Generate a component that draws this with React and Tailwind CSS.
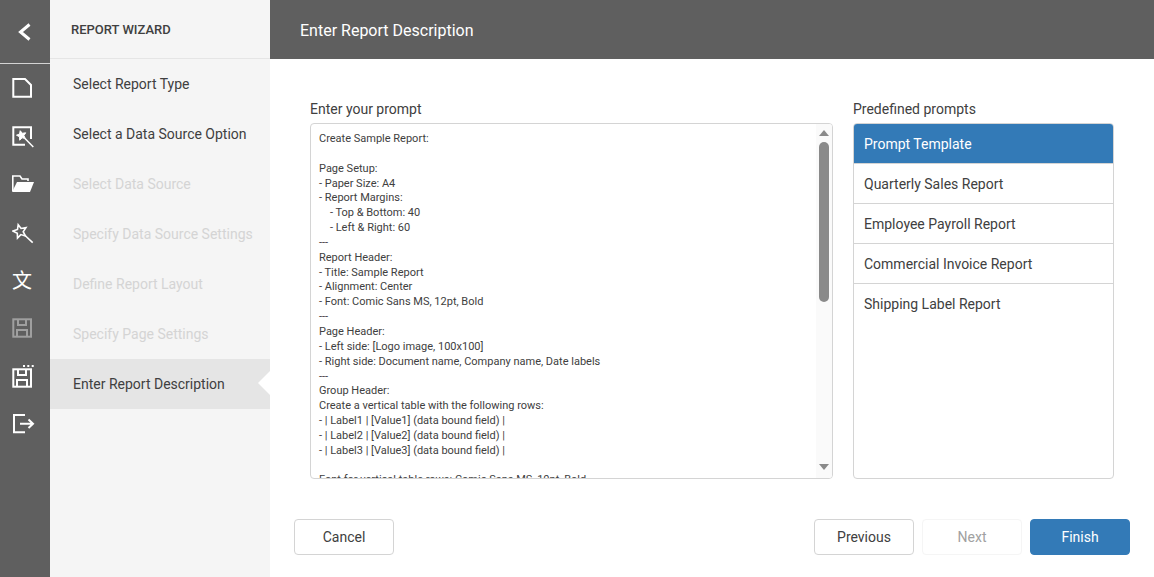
const STEPS = [
  { label: 'Select Report Type' },
  { label: 'Select a Data Source Option' },
  { label: 'Select Data Source', disabled: true },
  { label: 'Specify Data Source Settings', disabled: true },
  { label: 'Define Report Layout', disabled: true },
  { label: 'Specify Page Settings', disabled: true },
  { label: 'Enter Report Description', active: true },
];

const PROMPTS = [
  'Prompt Template',
  'Quarterly Sales Report',
  'Employee Payroll Report',
  'Commercial Invoice Report',
  'Shipping Label Report',
];

const PROMPT_TEXT = `Create Sample Report:

Page Setup:
- Paper Size: A4
- Report Margins:
    - Top & Bottom: 40
    - Left & Right: 60
---
Report Header:
- Title: Sample Report
- Alignment: Center
- Font: Comic Sans MS, 12pt, Bold
---
Page Header:
- Left side: [Logo image, 100x100]
- Right side: Document name, Company name, Date labels
---
Group Header:
Create a vertical table with the following rows:
- | Label1 | [Value1] (data bound field) |
- | Label2 | [Value2] (data bound field) |
- | Label3 | [Value3] (data bound field) |

Font for vertical table rows: Comic Sans MS, 10pt, Bold`;

// Five-pointed star used by the two wand icons
function starPoints(cx, cy, outer, inner) {
  const pts = [];
  for (let i = 0; i < 10; i++) {
    const r = i % 2 === 0 ? outer : inner;
    const a = ((i * 36 - 105) * Math.PI) / 180;
    pts.push(`${(cx + r * Math.cos(a)).toFixed(1)},${(cy + r * Math.sin(a)).toFixed(1)}`);
  }
  return pts.join(' ');
}

function Icon({ children }) {
  return (
    <svg viewBox="0 0 24 24" className="w-6 h-6 text-white" fill="none" stroke="currentColor" strokeWidth="2">
      {children}
    </svg>
  );
}

function FloppyBody({ top }) {
  return (
    <>
      <rect x="1.3" y={top} width="17.7" height="17.4" />
      <path d={`M6 ${top} V${top + 5.7} H14 V${top}`} />
      <path d={`M5 ${top + 17.4} V${top + 10.7} H15 V${top + 17.4}`} />
    </>
  );
}

function RailItem({ children }) {
  return <div className="h-12 flex items-center pl-3">{children}</div>;
}

function Rail() {
  return (
    <aside className="w-[50px] shrink-0 bg-[#5f5f5f]">
      <div className="h-16 flex items-center pl-3 border-b border-neutral-300">
        <Icon>
          <path d="M17.5 4.5 L8.5 12 L17.5 19.5" strokeWidth="3" />
        </Icon>
      </div>
      <RailItem>
        <Icon>
          <path d="M1.3 3 H13 L19 9 V20.7 H1.3 Z" />
        </Icon>
      </RailItem>
      <RailItem>
        <Icon>
          <path d="M13 20.7 H1.3 V3.3 H19 V15" />
          <polygon points={starPoints(9.5, 11.5, 5, 2.4)} fill="currentColor" strokeWidth="1" />
          <path d="M13 14.5 L21.3 23" strokeWidth="1.5" />
        </Icon>
      </RailItem>
      <RailItem>
        <Icon>
          <path d="M0.8 19 V4 H8 L10 7 H16 V9" strokeWidth="1.6" />
          <polygon points="5,10 22,10 18,20 0,20" fill="currentColor" stroke="none" />
        </Icon>
      </RailItem>
      <RailItem>
        <Icon>
          <polygon points={starPoints(8, 11.5, 7, 3.2)} strokeWidth="1.6" />
          <path d="M12.5 15 L20.7 22.7" strokeWidth="1.6" />
        </Icon>
      </RailItem>
      <RailItem>
        <span className="text-xl leading-none text-white font-['Noto_Sans_CJK_SC',sans-serif]">文</span>
      </RailItem>
      <RailItem>
        <div className="opacity-40">
          <Icon>
            <FloppyBody top={3.3} />
          </Icon>
        </div>
      </RailItem>
      <RailItem>
        <Icon>
          <FloppyBody top={5.3} />
          <g fill="currentColor" stroke="none">
            <rect x="11" y="1" width="2" height="2" />
            <rect x="15.3" y="1" width="2" height="2" />
            <rect x="19.7" y="1" width="2" height="2" />
          </g>
        </Icon>
      </RailItem>
      <RailItem>
        <Icon>
          <path d="M13 3 H2 V20.3 H13" />
          <path d="M8 11.7 H20 M16.5 7.5 L21 11.7 L16.5 16" />
        </Icon>
      </RailItem>
    </aside>
  );
}

function StepNav() {
  return (
    <nav className="w-[220px] shrink-0 bg-neutral-100">
      <div className="h-[59px] flex items-center pl-[21px] pt-0.5 border-b border-neutral-200 text-[13px] font-medium text-neutral-700">
        REPORT WIZARD
      </div>
      {STEPS.map(step => (
        <div
          key={step.label}
          className={`relative h-[50px] flex items-center pl-[23px] text-sm ${
            step.disabled ? 'text-neutral-300' : 'text-neutral-700'
          } ${step.active ? 'bg-neutral-200' : ''}`}
        >
          {step.label}
          {step.active && (
            <span className="absolute right-0 top-3 border-y-12 border-r-12 border-y-transparent border-r-white" />
          )}
        </div>
      ))}
    </nav>
  );
}

function Scrollbar() {
  return (
    <div className="w-4 shrink-0 flex flex-col items-center bg-neutral-50 text-[#8a8a8a]">
      <svg viewBox="0 0 10 6" className="w-2.5 h-1.5 mt-1.5 fill-current">
        <path d="M5 0 L10 6 H0 Z" />
      </svg>
      <div className="w-2.5 h-40 mt-1.5 rounded-full bg-current" />
      <svg viewBox="0 0 10 6" className="w-2.5 h-1.5 mt-auto mb-2 fill-current">
        <path d="M0 0 H10 L5 6 Z" />
      </svg>
    </div>
  );
}

function Button({ children, variant }) {
  const styles = {
    primary: 'bg-[#337ab7] border-[#337ab7] text-white',
    disabled: 'bg-white border-neutral-100 text-neutral-400',
  };
  return (
    <button className={`w-[100px] h-9 rounded border text-sm ${styles[variant] || 'bg-white border-neutral-300 text-neutral-700'}`}>
      {children}
    </button>
  );
}

export default function App() {
  return (
    <div className="h-[577px] flex overflow-hidden bg-white font-['Roboto',sans-serif]">
      <Rail />
      <StepNav />
      <main className="flex-1 flex flex-col min-w-0">
        <header className="h-[59px] shrink-0 flex items-center px-[30px] pt-0.5 bg-[#5f5f5f] text-base text-white">
          Enter Report Description
        </header>

        <div className="flex-1 min-h-0 flex gap-5 px-10 pt-10">
          <div className="flex-1 min-w-0 flex flex-col">
            <label className="h-6 text-sm text-neutral-700">Enter your prompt</label>
            <div className="flex-1 min-h-0 flex overflow-hidden rounded border border-neutral-300">
              <div className="flex-1 min-w-0 px-2 py-2 text-[11px] leading-[1.35] whitespace-pre-wrap text-neutral-700">
                {PROMPT_TEXT}
              </div>
              <Scrollbar />
            </div>
          </div>

          <div className="w-[261px] shrink-0 flex flex-col">
            <label className="h-6 text-sm text-neutral-700">Predefined prompts</label>
            <ul className="flex-1 min-h-0 rounded border border-neutral-300 overflow-hidden">
              {PROMPTS.map((prompt, i) => (
                <li
                  key={prompt}
                  className={`h-10 flex items-center px-2.5 text-sm border-b border-neutral-300 last:border-b-0 ${
                    i === 0 ? 'bg-[#337ab7] text-white' : 'text-neutral-700'
                  }`}
                >
                  {prompt}
                </li>
              ))}
            </ul>
          </div>
        </div>

        <footer className="flex items-center gap-2 px-6 pt-10 pb-[22px]">
          <Button>Cancel</Button>
          <div className="flex-1" />
          <Button>Previous</Button>
          <Button variant="disabled">Next</Button>
          <Button variant="primary">Finish</Button>
        </footer>
      </main>
    </div>
  );
}
